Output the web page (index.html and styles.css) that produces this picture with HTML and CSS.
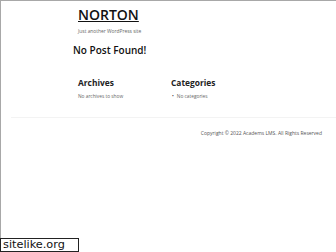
FILE: index.html
```html
<!DOCTYPE html>
<html>
<head>
<meta charset="utf-8">
<link rel="stylesheet" href="styles.css">
</head>
<body>
<div class="frame">
  <header class="site-header">
    <a class="site-title" href="#">NORTON</a>
    <p class="tagline">Just another WordPress site</p>
  </header>
  <main class="content">
    <h1 class="page-title">No Post Found!</h1>
  </main>
  <section class="widgets">
    <div class="widget">
      <h2 class="widget-title">Archives</h2>
      <p class="widget-text">No archives to show</p>
    </div>
    <div class="widget">
      <h2 class="widget-title">Categories</h2>
      <ul class="widget-list"><li>No categories</li></ul>
    </div>
  </section>
  <footer class="site-footer">
    <p class="copyright">Copyright © 2022 Academs LMS. All Rights Reserved</p>
  </footer>
</div>
<div class="watermark">sitelike.org</div>
</body>
</html>
```
FILE: styles.css
```css
html, body {
  margin: 0;
  padding: 0;
  background: #fff;
}
body {
  width: 336px;
  height: 252px;
  overflow: hidden;
  position: relative;
  font-family: "Open Sans", "Liberation Sans", sans-serif;
  color: #222;
}
.frame {
  box-sizing: border-box;
  height: 252px;
  border-top: 1px solid #a8a8a8;
  border-left: 1px solid #a8a8a8;
  display: flex;
  flex-direction: column;
}
.site-header {
  padding: 5px 0 0 77px;
  display: flex;
  flex-direction: column;
  align-items: flex-start;
}
.site-title {
  font-size: 14px;
  font-weight: 600;
  color: #111;
  text-decoration: underline;
  text-decoration-thickness: 1px;
  text-underline-offset: 1px;
  line-height: 18px;
}
.tagline {
  margin: 4px 0 0 0;
  font-size: 4.9px;
  color: #666;
  line-height: 6px;
}
.content {
  padding: 9px 0 0 72px;
}
.page-title {
  margin: 0;
  font-size: 10px;
  font-weight: 600;
  color: #111;
  line-height: 14px;
}
.widgets {
  display: flex;
  padding: 20px 0 0 77px;
}
.widget {
  width: 93px;
}
.widget-title {
  margin: 0;
  font-size: 8.4px;
  font-weight: 700;
  color: #222;
  line-height: 11px;
}
.widget-text {
  margin: 5px 0 0 0;
  font-size: 4.8px;
  color: #666;
  line-height: 6px;
}
.widget-list {
  margin: 5px 0 0 0;
  padding: 0 0 0 1px;
  list-style: none;
  font-size: 4.8px;
  color: #666;
  line-height: 6px;
}
.widget-list li::before {
  content: "•";
  color: #333;
  margin-right: 3px;
}
.site-footer {
  margin: 18px 0 0 10px;
  border-top: 1px solid #f3f3f3;
  padding: 12px 14px 0 0;
  display: flex;
  justify-content: flex-end;
}
.copyright {
  margin: 0;
  font-size: 5px;
  color: #555;
  line-height: 7px;
}
.watermark {
  position: absolute;
  left: 0;
  bottom: 0;
  width: 75px;
  height: 12px;
  border: 1px solid #222;
  background: #fff;
  font-family: "DejaVu Sans", sans-serif;
  font-size: 11.3px;
  line-height: 12px;
  color: #111;
  padding-left: 2px;
  box-sizing: content-box;
}
```
